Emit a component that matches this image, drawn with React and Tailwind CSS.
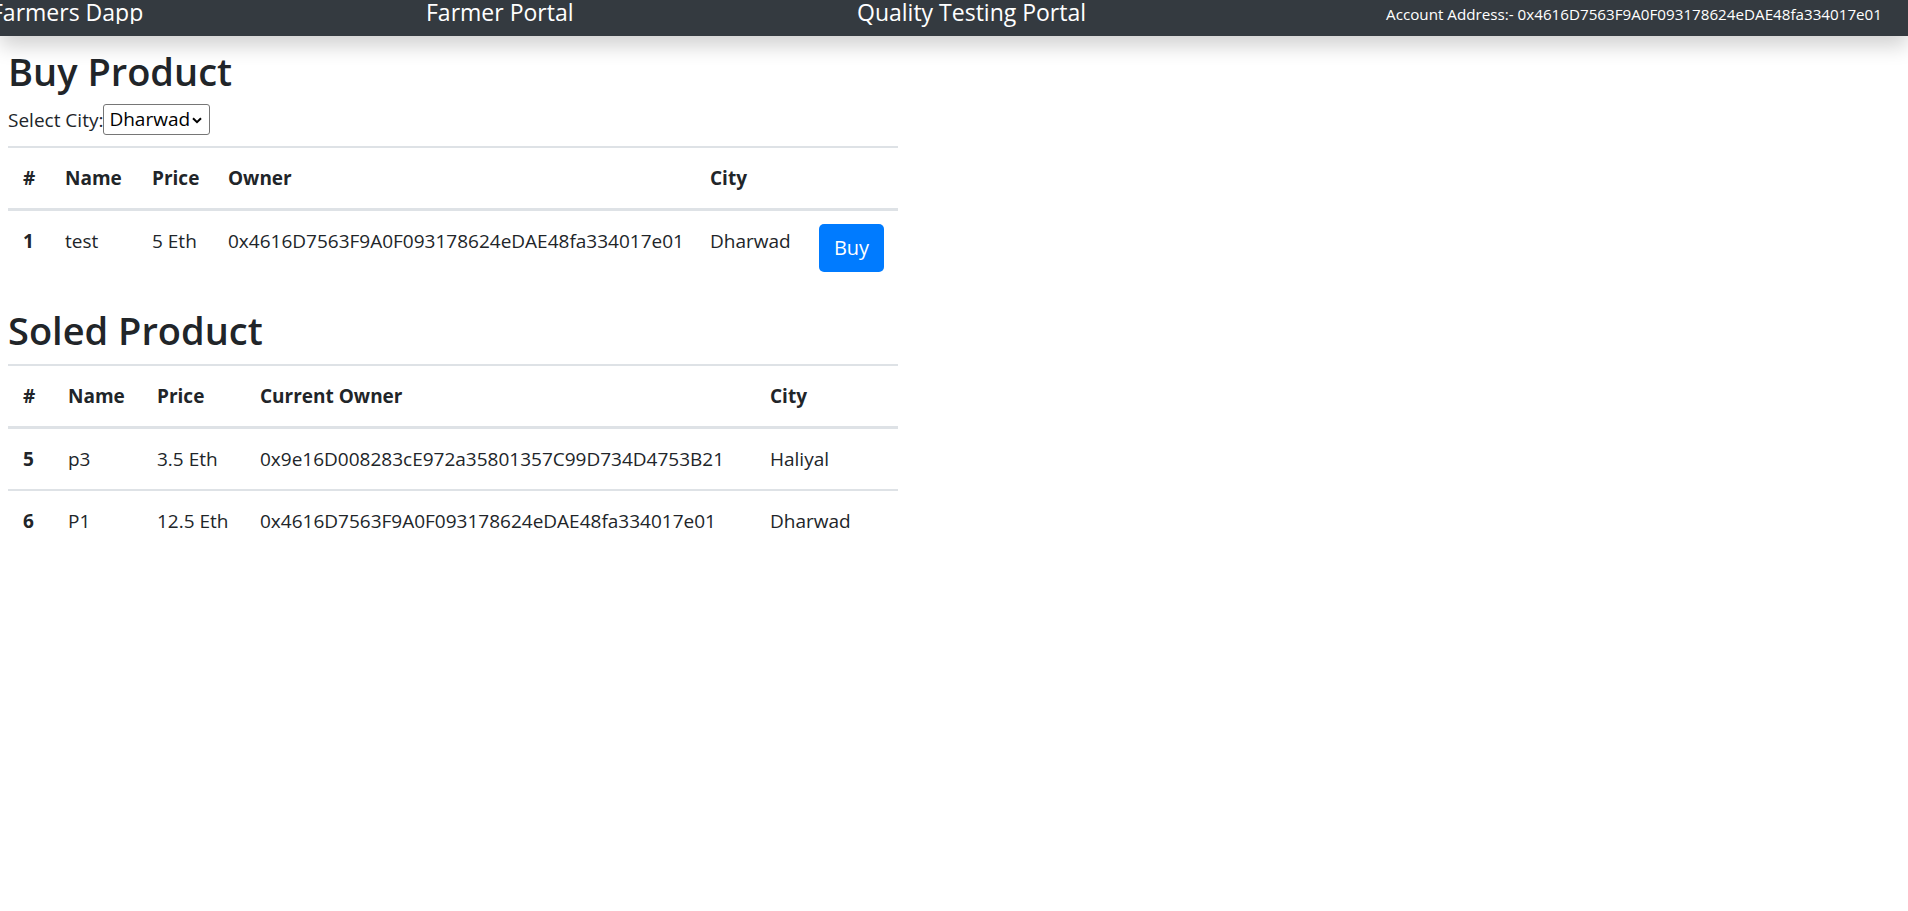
import React from "react";

const font = { fontFamily: '"Open Sans", "Noto Sans", sans-serif' };

function Navbar() {
  return (
    <div className="relative z-10 flex h-[36px] w-full items-start whitespace-nowrap bg-[#343a40] text-white shadow-[0_10px_20px_rgba(0,0,0,0.18)]">
      <div className="w-[426px] overflow-hidden">
        <div className="-ml-[9px] text-[23px] leading-[24px]">Farmers Dapp</div>
      </div>
      <div className="w-[431px] text-[23px] leading-[24px]">Farmer Portal</div>
      <div className="flex-1 text-[23px] leading-[24px]">Quality Testing Portal</div>
      <div className="mt-[6px] pr-[26px] text-[15.2px] leading-[16px]">
        Account Address:- 0x4616D7563F9A0F093178624eDAE48fa334017e01
      </div>
    </div>
  );
}

function Th({ children, w }) {
  return (
    <th className={`${w} whitespace-nowrap px-[15px] py-[15px] text-left align-top font-bold leading-[30px]`}>
      {children}
    </th>
  );
}

function Td({ children, bold }) {
  return (
    <td className={`whitespace-nowrap px-[15px] py-[15px] align-top leading-[30px] ${bold ? "font-bold" : ""}`}>
      {children}
    </td>
  );
}

export default function App() {
  return (
    <div className="min-h-[911px] bg-white text-[19px] text-[#212529]" style={font}>
      <Navbar />
      <div className="px-[8px]">
        <h2 className="mt-[11px] mb-[9px] text-[38px] font-semibold leading-[48px]">Buy Product</h2>
        <div className="flex h-[31px] items-center">
          <span className="leading-[30px]">Select City:</span>
          <div className="relative">
            <select
              defaultValue="Dharwad"
              className="h-[31px] w-[107px] appearance-none rounded-[3px] border border-[#767676] bg-white pl-[5px] text-[19px] leading-[29px] text-black"
            >
              <option>Dharwad</option>
              <option>Haliyal</option>
            </select>
            <svg
              className="pointer-events-none absolute right-[8px] top-[13px]"
              width="10"
              height="7"
              viewBox="0 0 10 7"
            >
              <path d="M1 1.2 L5 5.2 L9 1.2" fill="none" stroke="#000" strokeWidth="2" />
            </svg>
          </div>
        </div>

        <table className="mt-[11px] mb-[19px] w-[890px] table-fixed border-collapse">
          <thead>
            <tr className="border-t-2 border-b-[3px] border-[#dee2e6]">
              <Th w="w-[42px]">#</Th>
              <Th w="w-[87px]">Name</Th>
              <Th w="w-[76px]">Price</Th>
              <Th w="w-[482px]">Owner</Th>
              <Th w="w-[109px]">City</Th>
              <Th w="w-[94px]"></Th>
            </tr>
          </thead>
          <tbody>
            <tr>
              <Td bold>1</Td>
              <Td>test</Td>
              <Td>5 Eth</Td>
              <Td>0x4616D7563F9A0F093178624eDAE48fa334017e01</Td>
              <Td>Dharwad</Td>
              <td className="px-[15px] pt-[13px] pb-[15px] align-top">
                <button className="h-[48px] w-[65px] rounded-[5px] bg-[#007bff] text-[20px] leading-[30px] text-white">
                  Buy
                </button>
              </td>
            </tr>
          </tbody>
        </table>

        <h2 className="mb-[10px] text-[38px] font-semibold leading-[48px]">Soled Product</h2>
        <table className="w-[890px] table-fixed border-collapse">
          <thead>
            <tr className="border-t-2 border-b-[3px] border-[#dee2e6]">
              <Th w="w-[45px]">#</Th>
              <Th w="w-[89px]">Name</Th>
              <Th w="w-[103px]">Price</Th>
              <Th w="w-[510px]">Current Owner</Th>
              <Th w="w-[143px]">City</Th>
            </tr>
          </thead>
          <tbody>
            <tr>
              <Td bold>5</Td>
              <Td>p3</Td>
              <Td>3.5 Eth</Td>
              <Td>0x9e16D008283cE972a35801357C99D734D4753B21</Td>
              <Td>Haliyal</Td>
            </tr>
            <tr className="border-t-2 border-[#dee2e6]">
              <Td bold>6</Td>
              <Td>P1</Td>
              <Td>12.5 Eth</Td>
              <Td>0x4616D7563F9A0F093178624eDAE48fa334017e01</Td>
              <Td>Dharwad</Td>
            </tr>
          </tbody>
        </table>
      </div>
    </div>
  );
}
